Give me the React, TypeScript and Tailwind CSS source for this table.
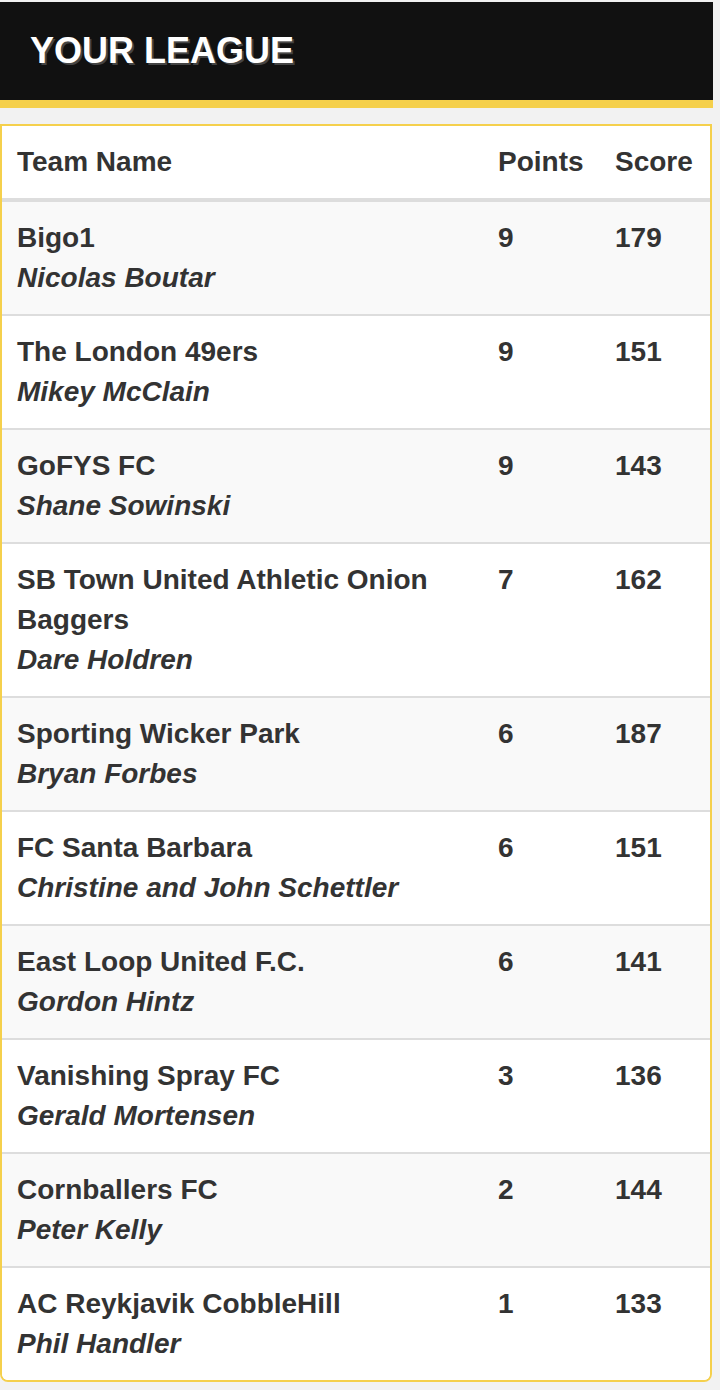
const teams = [
  { name: "Bigo1", owner: "Nicolas Boutar", points: 9, score: 179 },
  { name: "The London 49ers", owner: "Mikey McClain", points: 9, score: 151 },
  { name: "GoFYS FC", owner: "Shane Sowinski", points: 9, score: 143 },
  { name: "SB Town United Athletic Onion Baggers", owner: "Dare Holdren", points: 7, score: 162 },
  { name: "Sporting Wicker Park", owner: "Bryan Forbes", points: 6, score: 187 },
  { name: "FC Santa Barbara", owner: "Christine and John Schettler", points: 6, score: 151 },
  { name: "East Loop United F.C.", owner: "Gordon Hintz", points: 6, score: 141 },
  { name: "Vanishing Spray FC", owner: "Gerald Mortensen", points: 3, score: 136 },
  { name: "Cornballers FC", owner: "Peter Kelly", points: 2, score: 144 },
  { name: "AC Reykjavik CobbleHill", owner: "Phil Handler", points: 1, score: 133 },
];

export default function App() {
  return (
    <div
      className="min-h-[1390px] w-[720px] bg-[#f2f2f2] pt-[2px] text-[#333]"
      style={{ fontFamily: '"Liberation Sans", Arial, sans-serif' }}
    >
      {/* Header */}
      <div className="w-[713px] border-b-8 border-[#f5d04c] bg-[#111]">
        <h1 className="flex h-[98px] items-center px-[30px] text-[36px] font-bold text-white [text-shadow:2px_2px_0_#444]">
          YOUR LEAGUE
        </h1>
      </div>

      {/* Table card */}
      <div className="mt-4 w-[712px] overflow-hidden rounded-b-lg border-2 border-[#f5d04c] bg-white">
        <table className="w-full table-fixed border-collapse text-[28px] leading-[40px] font-bold">
          <colgroup>
            <col className="w-[481px]" />
            <col className="w-[117px]" />
            <col />
          </colgroup>
          <thead>
            <tr className="border-b-4 border-[#ddd]">
              <th className="px-[15px] py-4 text-left">Team Name</th>
              <th className="px-[15px] py-4 text-left">Points</th>
              <th className="px-[15px] py-4 text-left">Score</th>
            </tr>
          </thead>
          <tbody>
            {teams.map((t, i) => (
              <tr
                key={t.name}
                className={`${i % 2 === 0 ? "bg-[#f9f9f9]" : "bg-white"} ${
                  i < teams.length - 1 ? "border-b-2 border-[#ddd]" : ""
                }`}
              >
                <td className="px-[15px] py-4 align-top">
                  <div>{t.name}</div>
                  <div className="italic">{t.owner}</div>
                </td>
                <td className="px-[15px] py-4 align-top">{t.points}</td>
                <td className="px-[15px] py-4 align-top">{t.score}</td>
              </tr>
            ))}
          </tbody>
        </table>
      </div>
    </div>
  );
}
